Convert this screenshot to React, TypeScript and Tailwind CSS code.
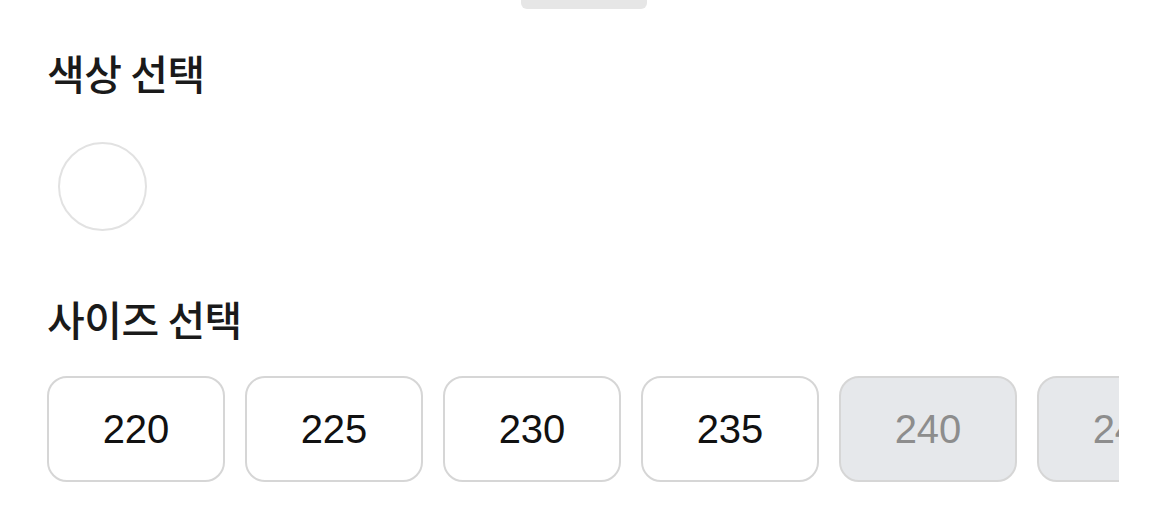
import React from "react";

const sizes = [
  { label: "220", soldOut: false },
  { label: "225", soldOut: false },
  { label: "230", soldOut: false },
  { label: "235", soldOut: false },
  { label: "240", soldOut: true },
  { label: "245", soldOut: true },
];

const font = { fontFamily: '"Noto Sans CJK KR", "Noto Sans", sans-serif' };

export default function App() {
  return (
    <div className="w-[1168px] h-[528px] bg-white overflow-hidden" style={font}>
      <div className="mx-auto w-[126px] h-[9px] rounded-b-[6px] bg-[#e6e6e6]" />
      <div className="pl-[47px] pr-[49px]">
        <h2 className="mt-[37px] text-[41px] leading-[52px] font-medium text-[#1a1a1a] tracking-[-0.5px]">
          색상 선택
        </h2>
        <div className="mt-[44px] pl-[11px]">
          <button className="block w-[89px] h-[89px] rounded-full border-2 border-[#e2e2e2] bg-white" />
        </div>
        <h2 className="mt-[61px] text-[41px] leading-[52px] font-medium text-[#1a1a1a] tracking-[-0.5px]">
          사이즈 선택
        </h2>
        <div className="mt-[32px] flex gap-[20px] overflow-hidden">
          {sizes.map((s) => (
            <button
              key={s.label}
              className={
                s.soldOut
                  ? "shrink-0 w-[178px] h-[106px] rounded-[20px] border-2 border-[#d6d6d6] bg-[#e6e8eb] text-[#8d8d8d] text-[40px] font-['Liberation_Sans',sans-serif]"
                  : "shrink-0 w-[178px] h-[106px] rounded-[20px] border-2 border-[#d6d6d6] bg-white text-[#111] text-[40px] font-['Liberation_Sans',sans-serif]"
              }
            >
              {s.label}
            </button>
          ))}
        </div>
      </div>
    </div>
  );
}
